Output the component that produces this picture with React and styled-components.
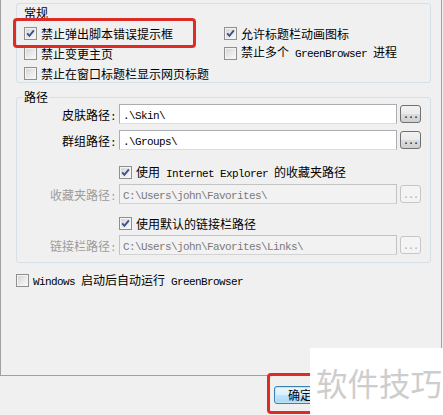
import styled, { createGlobalStyle } from "styled-components";

const GlobalStyle = createGlobalStyle`
  html, body {
    margin: 0;
    padding: 0;
    background: #f0f0f0;
  }
  body {
    width: 443px;
    height: 415px;
    overflow: hidden;
    font-family: "Noto Sans CJK SC", sans-serif;
    font-size: 12px;
    color: #000;
  }
`;

const Dialog = styled.div`
  position: relative;
  width: 443px;
  height: 415px;
  overflow: hidden;
  background: #f0f0f0;
`;

const TabPage = styled.div`
  box-sizing: border-box;
  width: 442px;
  height: 381px;
  margin-top: -5px;
  padding: 0 0 0 15px;
  border: 1px solid #a0a0a0;
  display: flex;
  flex-direction: column;
`;

const Group = styled.div`
  position: relative;
  box-sizing: border-box;
  width: 415px;
  margin-top: ${(p) => p.$top}px;
  border: 1px solid #d5dfe5;
  border-radius: 3px;
`;

const GroupTitle = styled.span`
  position: absolute;
  left: 6px;
  top: ${(p) => p.$top}px;
  padding: 0 1px;
  line-height: 14px;
  background: #f0f0f0;
`;

const OptionGrid = styled.div`
  display: grid;
  grid-template-columns: 200px auto;
  grid-auto-rows: 13px;
  row-gap: 7px;
  padding: 22.5px 0 0 7px;
  height: 78px;
  box-sizing: border-box;
`;

const Check = styled.label`
  display: flex;
  align-items: center;
  gap: 4px;
  height: 13px;
  white-space: nowrap;
  line-height: 13px;
  margin: ${(p) => p.$margin || "0"};
`;

const Box = styled.span`
  flex: none;
  position: relative;
  box-sizing: border-box;
  width: 13px;
  height: 13px;
  border: 1px solid #8e8f8f;
  background: linear-gradient(135deg, #d2d2d2 0%, #e8e8e8 50%, #fbfbfb 100%);
  box-shadow: inset 0 0 0 1px #f4f4f4;

  svg {
    position: absolute;
    left: 0;
    top: 0;
  }
`;

const Mono = styled.span`
  font-family: "Liberation Mono", monospace;
  font-size: 11px;
  letter-spacing: -0.6px;
  white-space: pre;
`;

const PathBody = styled.div`
  display: flex;
  flex-direction: column;
  padding: 6px 0 7px 0;
`;

const PathRow = styled.div`
  display: grid;
  grid-template-columns: 99px 278px 21px;
  column-gap: 3px;
  align-items: center;
  height: 20px;
  margin-top: ${(p) => p.$top || 0}px;
`;

const FieldLabel = styled.span`
  text-align: right;
  white-space: nowrap;
  color: ${(p) => (p.$disabled ? "#9c9c9c" : "#000")};
`;

const TextBox = styled.div`
  box-sizing: border-box;
  height: 20px;
  padding-left: 3px;
  border: 1px solid ${(p) => (p.$disabled ? "#c3c3c3" : "#abadb3")};
  border-bottom-color: ${(p) => (p.$disabled ? "#d2d2d2" : "#d8dde3")};
  background: ${(p) => (p.$disabled ? "#f2f2f2" : "#fff")};
  color: ${(p) => (p.$disabled ? "#7a7a7a" : "#000")};
  line-height: 17px;
  overflow: hidden;
`;

const Browse = styled.div`
  box-sizing: border-box;
  height: 18px;
  width: 21px;
  border: 1px solid ${(p) => (p.$disabled ? "#c4c6c8" : "#707070")};
  border-radius: 3px;
  background: ${(p) =>
    p.$disabled
      ? "#f4f4f4"
      : "linear-gradient(#f2f2f2 0%, #ebebeb 50%, #dddddd 51%, #cfcfcf 100%)"};
  color: ${(p) => (p.$disabled ? "#a8a8a8" : "#000")};
  text-align: center;
  line-height: 18px;
  padding-top: 1px;
  font-family: "Liberation Mono", monospace;
  font-size: 10px;
  letter-spacing: -1px;
`;

const Footer = styled.div`
  display: flex;
  padding: 10px 0 0 274px;
`;

const OkButton = styled.div`
  box-sizing: border-box;
  width: 52px;
  height: 18px;
  border: 1px solid #3c7fb1;
  border-radius: 3px;
  background: linear-gradient(#eaf6fd 0%, #d9f0fc 50%, #bee6fd 51%, #a7d9f5 100%);
  box-shadow: inset 0 0 0 1px #c4e5f6;
  text-align: center;
  line-height: 16px;
`;

const Highlight = styled.div`
  position: absolute;
  left: ${(p) => p.$x}px;
  top: ${(p) => p.$y}px;
  width: ${(p) => p.$w}px;
  height: ${(p) => p.$h}px;
  box-sizing: border-box;
  border: 3px solid #dd2b26;
  border-radius: 4px;
`;

const Watermark = styled.div`
  position: absolute;
  left: 310px;
  top: 348px;
  width: 133px;
  height: 67px;
  background: #fff;
  padding: 17px 0 0 6px;
  box-sizing: border-box;
  color: #cdcdcd;
  font-size: 31.5px;
  line-height: 34px;
  white-space: nowrap;
`;

const Checkbox = ({ checked, children, margin }) => (
  <Check $margin={margin}>
    <Box>
      {checked && (
        <svg width="11" height="11" viewBox="0 0 11 11">
          <path d="M2.2 5.4 L4.4 7.9 L8.9 2.4" fill="none" stroke="#3d5190" strokeWidth="1.9" />
        </svg>
      )}
    </Box>
    <span>{children}</span>
  </Check>
);

const App = () => {
  return (
    <Dialog>
      <GlobalStyle />
      <TabPage>
        <Group $top={7}>
          <GroupTitle $top={2}>常规</GroupTitle>
          <OptionGrid>
            <Checkbox checked>禁止弹出脚本错误提示框</Checkbox>
            <Checkbox checked>允许标题栏动画图标</Checkbox>
            <Checkbox>禁止变更主页</Checkbox>
            <Checkbox>
              禁止多个<Mono> GreenBrowser </Mono>进程
            </Checkbox>
            <Checkbox>禁止在窗口标题栏显示网页标题</Checkbox>
          </OptionGrid>
        </Group>

        <Group $top={14}>
          <GroupTitle $top={-8}>路径</GroupTitle>
          <PathBody>
            <PathRow>
              <FieldLabel>皮肤路径<Mono>:</Mono></FieldLabel>
              <TextBox><Mono>.\Skin\</Mono></TextBox>
              <Browse>...</Browse>
            </PathRow>
            <PathRow $top={6}>
              <FieldLabel>群组路径<Mono>:</Mono></FieldLabel>
              <TextBox><Mono>.\Groups\</Mono></TextBox>
              <Browse>...</Browse>
            </PathRow>
            <Checkbox checked margin="16px 0 0 102px">
              使用<Mono> Internet Explorer </Mono>的收藏夹路径
            </Checkbox>
            <PathRow $top={5}>
              <FieldLabel $disabled>收藏夹路径<Mono>:</Mono></FieldLabel>
              <TextBox $disabled><Mono>C:\Users\john\Favorites\</Mono></TextBox>
              <Browse $disabled>...</Browse>
            </PathRow>
            <Checkbox checked margin="13px 0 0 102px">
              使用默认的链接栏路径
            </Checkbox>
            <PathRow $top={5}>
              <FieldLabel $disabled>链接栏路径<Mono>:</Mono></FieldLabel>
              <TextBox $disabled><Mono>C:\Users\john\Favorites\Links\</Mono></TextBox>
              <Browse $disabled>...</Browse>
            </PathRow>
          </PathBody>
        </Group>

        <Checkbox margin="11px 0 0 0">
          <Mono>Windows </Mono>启动后自动运行<Mono> GreenBrowser</Mono>
        </Checkbox>
      </TabPage>

      <Footer>
        <OkButton>确定</OkButton>
      </Footer>

      <Highlight $x={13} $y={18} $w={183} $h={30} />
      <Highlight $x={267} $y={373} $w={90} $h={41} />
      <Watermark>软件技巧</Watermark>
    </Dialog>
  );
};

export default App;
